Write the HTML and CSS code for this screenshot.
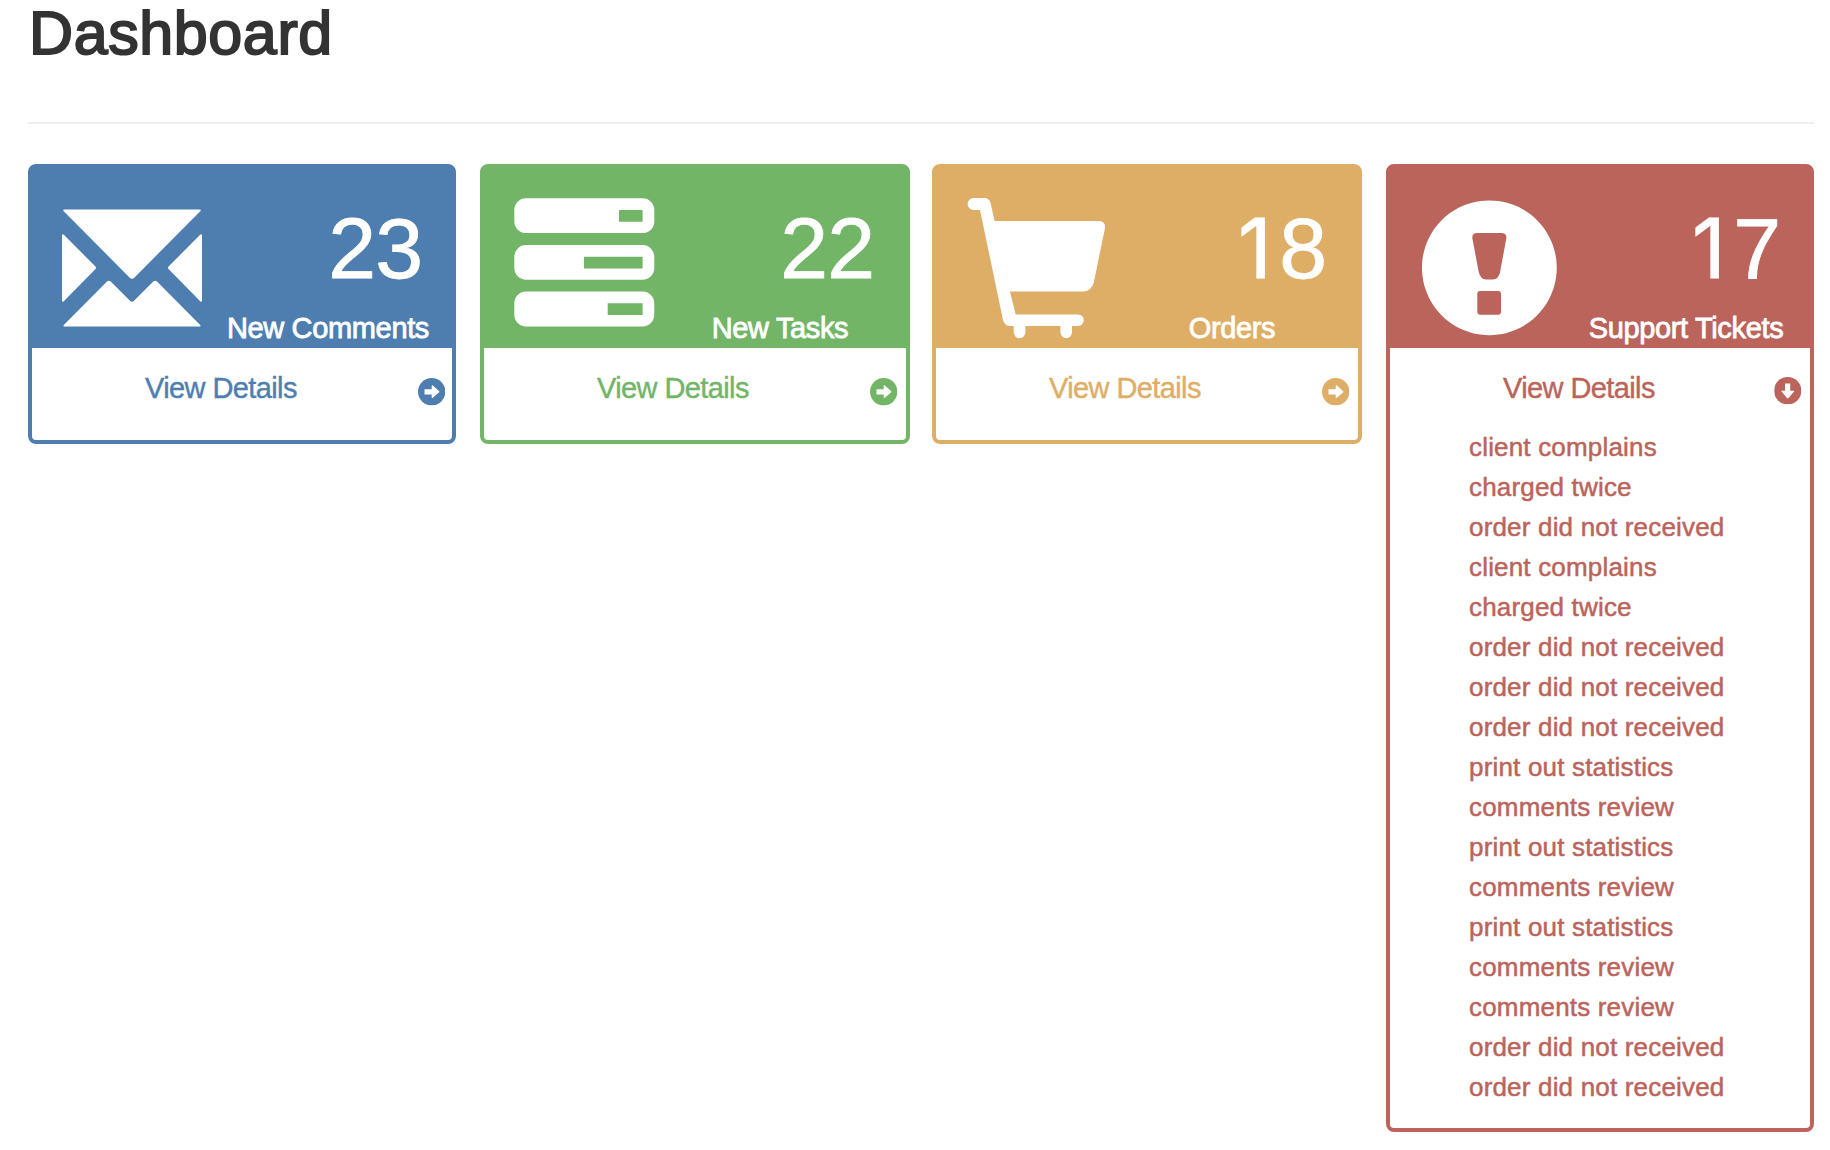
FILE: index.html
```html
<!DOCTYPE html>
<html lang="en">
<head>
<meta charset="utf-8">
<title>Dashboard</title>
<link rel="stylesheet" href="styles.css">
</head>
<body>
<svg class="sprite" aria-hidden="true">
  <symbol id="arrow" viewBox="0 0 27.4 27.4">
    <circle cx="13.7" cy="13.7" r="13.7" fill="currentColor"/>
    <path d="M6.5 11.200h7.200V8c0-.8.5-1 1.100-.5l6.200 5.400q.9.800 0 1.600l-6.200 5.200c-.6.500-1.100.3-1.100-.4v-2.900H6.500z" fill="#fff"/>
  </symbol>
</svg>
<main class="page">
  <h1 class="page-title">Dashboard</h1>
  <div class="cards">
    <section class="card card-blue">
      <header class="card-head">
        <svg class="card-icon" viewBox="0 0 140 140" fill="#fff">
          <path d="M2 11.5H138Q139.2 12 138.5 13L72.5 79.5Q70 82 67.5 79.5L1.5 13Q.8 12 2 11.5Z"/>
          <path d="M0 37Q.7 35.6 1.8 36.8L33 68Q35 69.8 33 71.6L1.8 103.2Q.7 104.4 0 103Z"/>
          <path d="M140 37Q139.3 35.6 138.2 36.8L107 68Q105 69.8 107 71.6L138.2 103.2Q139.3 104.4 140 103Z"/>
          <path d="M2 128.6Q.8 128 1.8 127L44.5 84Q46.7 81.5 49 83.7L67.7 102.6Q70 105 72.3 102.6L91 83.7Q93.3 81.5 95.5 84L138.2 127Q139.2 128 138 128.6Z"/>
        </svg>
        <div class="card-stat"><div class="stat-value">23</div><div class="stat-label">New Comments</div></div>
      </header>
      <div class="card-body">
        <a class="details">View Details<svg class="details-icon"><use href="#arrow"/></svg></a>
      </div>
    </section>
    <section class="card card-green card-wide">
      <header class="card-head">
        <svg class="card-icon" viewBox="0 0 140 140" fill="#fff" fill-rule="evenodd">
          <path d="M12 .2H128.6A11.7 11.7 0 0 1 140.3 11.9V23.4A11.7 11.7 0 0 1 128.6 35.1H12A11.7 11.7 0 0 1 .3 23.4V11.9A11.7 11.7 0 0 1 12 .2ZM105 12V23.7H128.6V12Z"/>
          <path d="M12 47H128.6A11.7 11.7 0 0 1 140.3 58.7V70.1A11.7 11.7 0 0 1 128.6 81.8H12A11.7 11.7 0 0 1 .3 70.1V58.7A11.7 11.7 0 0 1 12 47ZM70 58.8V70.4H128.6V58.8Z"/>
          <path d="M12 93.6H128.6A11.7 11.7 0 0 1 140.3 105.3V116.7A11.7 11.7 0 0 1 128.6 128.4H12A11.7 11.7 0 0 1 .3 116.7V105.3A11.7 11.7 0 0 1 12 93.6ZM93.7 105.3V117H128.6V105.3Z"/>
        </svg>
        <div class="card-stat"><div class="stat-value">22</div><div class="stat-label">New Tasks</div></div>
      </header>
      <div class="card-body">
        <a class="details">View Details<svg class="details-icon"><use href="#arrow"/></svg></a>
      </div>
    </section>
    <section class="card card-orange card-wide">
      <header class="card-head">
        <svg class="card-icon" viewBox="0 0 140 140" fill="#fff">
          <path d="M7.6 0H18.5Q23.5 0 24.7 5.5L28.6 23H133.3Q139.6 23.5 139 30L127.7 85Q125.5 92.8 117.5 93.4H44L49.7 116.4H112A5.8 5.8 0 0 1 112 128H106V134.3A5.8 5.8 0 0 1 94.4 134.3V128H59.4V134.3A5.8 5.8 0 0 1 47.7 134.3V128H43.5Q38.5 127.5 37 122L14 12H7.6A6 6 0 0 1 7.6 0Z"/>
        </svg>
        <div class="card-stat"><div class="stat-value"><span class="digit-one">1</span>8</div><div class="stat-label">Orders</div></div>
      </header>
      <div class="card-body">
        <a class="details">View Details<svg class="details-icon"><use href="#arrow"/></svg></a>
      </div>
    </section>
    <section class="card card-red">
      <header class="card-head">
        <svg class="card-icon" viewBox="0 0 140 140" fill="#fff" fill-rule="evenodd">
          <path d="M69.4 2.4A67.4 67.4 0 1 1 69.3 2.4ZM56.5 35Q52 35.3 52.3 40L58.8 74.5Q60.5 81 66 81.5H73Q78.500 81 80 74.500L86.400 40Q86.600 35.300 82 35ZM60 93Q57.300 93.200 57.300 96V114Q57.500 116.600 60 116.700H78.300Q81 116.500 81 114V96Q81 93.200 78.300 93Z"/>
        </svg>
        <div class="card-stat"><div class="stat-value"><span class="digit-one">1</span>7</div><div class="stat-label">Support Tickets</div></div>
      </header>
      <div class="card-body">
        <a class="details">View Details<svg class="details-icon icon-down"><use href="#arrow"/></svg></a>
        <ul class="tickets">
          <li>client complains</li>
          <li>charged twice</li>
          <li>order did not received</li>
          <li>client complains</li>
          <li>charged twice</li>
          <li>order did not received</li>
          <li>order did not received</li>
          <li>order did not received</li>
          <li>print out statistics</li>
          <li>comments review</li>
          <li>print out statistics</li>
          <li>comments review</li>
          <li>print out statistics</li>
          <li>comments review</li>
          <li>comments review</li>
          <li>order did not received</li>
          <li>order did not received</li>
        </ul>
      </div>
    </section>
  </div>
</main>
</body>
</html>
```
FILE: styles.css
```css
* { box-sizing: border-box; }
body {
  margin: 0;
  background: #fff;
  font-family: "Liberation Sans", Arial, sans-serif;
  font-size: 28px;
  line-height: 40px;
}
.sprite { display: none; }
.page { width: 1786px; margin-left: 28px; }
.page-title {
  margin: 0;
  height: 124px;
  padding: 3px 0 0 1px;
  border-bottom: 2px solid #eee;
  color: #333;
  font-size: 61px;
  line-height: 61px;
  font-weight: 400;
  letter-spacing: 0.6px;
  -webkit-text-stroke: 2px #333;
}
.cards {
  display: grid;
  grid-template-columns: 452px 452px 454px 428px;
  align-items: start;
  margin-top: 40px;
}
.card {
  width: 428px;
  border: 4px solid var(--tone);
  border-radius: 8px;
  color: var(--tone);
}
.card-wide { width: 430px; }
.card-blue { --tone: #4e7eb0; }
.card-green { --tone: #73b567; }
.card-orange { --tone: #deae66; }
.card-red { --tone: #bb645b; }
.card-head {
  display: flex;
  height: 180px;
  padding: 30px 0 0 30px;
  background: var(--tone);
  color: #fff;
}
.card-icon { flex: none; width: 140px; height: 140px; overflow: visible; }
.card-stat { width: 206px; margin-left: 23px; padding-top: 9px; }
.stat-value {
  padding-right: 9px;
  font-size: 86px;
  line-height: 83px;
  letter-spacing: -1px;
  text-align: right;
  -webkit-text-stroke: 0.8px #fff;
}
.digit-one {
  display: inline-block;
  width: 0.6em;
  font-family: Inter, sans-serif;
  font-size: 83px;
  line-height: 0;
  text-align: center;
}
.stat-label {
  margin-top: 18px;
  font-size: 29px;
  text-align: center;
  white-space: nowrap;
  letter-spacing: -0.35px;
  -webkit-text-stroke: 0.8px #fff;
}
.card-body { padding: 20px 9px 21px 113px; }
.details {
  display: flex;
  justify-content: space-between;
  height: 51px;
  font-size: 29px;
  letter-spacing: -0.6px;
  -webkit-text-stroke: 0.4px currentColor;
}
.details-icon { width: 27.4px; height: 27.4px; margin-top: 10.3px; }
.card-blue .details-icon { margin-right: -2.3px; }
.card-orange .details-icon { margin-right: -0.7px; }
.icon-down { transform: rotate(90deg); margin-top: 9.3px; }
.tickets {
  margin: 8px 0 0 -34px;
  padding: 0;
  list-style: none;
  font-size: 26px;
  letter-spacing: 0.18px;
  -webkit-text-stroke: 0.5px currentColor;
}
```
